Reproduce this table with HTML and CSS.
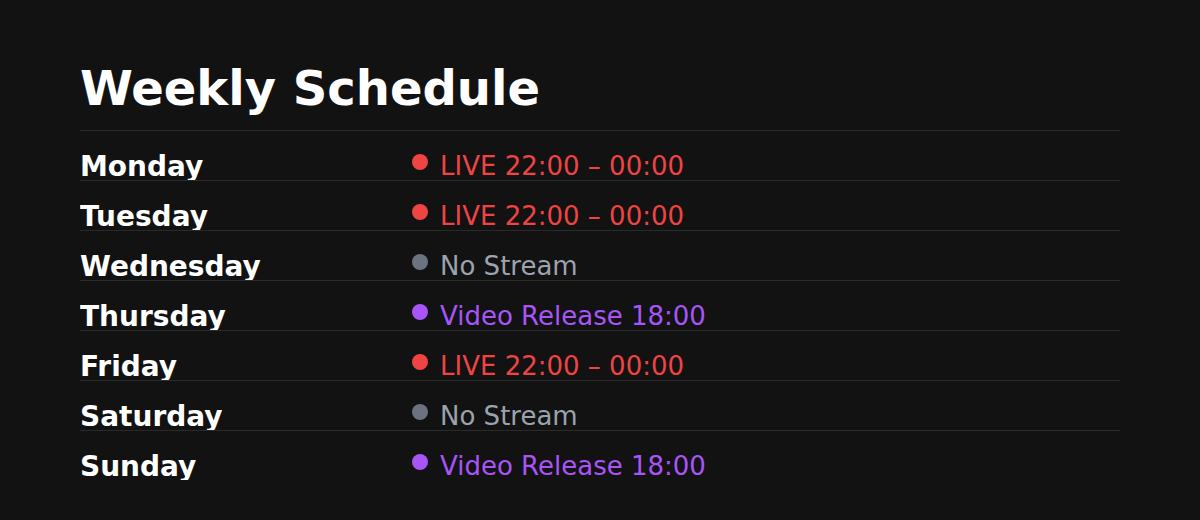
FILE: index.html
```html
<!DOCTYPE html>
<html lang="en">
<head>
<meta charset="utf-8">
<title>Weekly Schedule</title>
<link rel="stylesheet" href="styles.css">
</head>
<body>
<main class="schedule">
  <h1 class="title">Weekly Schedule</h1>
  <ul class="days">
    <li class="row"><span class="day">Monday</span><span class="status live"><span class="dot"></span>LIVE 22:00 – 00:00</span></li>
    <li class="row"><span class="day">Tuesday</span><span class="status live"><span class="dot"></span>LIVE 22:00 – 00:00</span></li>
    <li class="row"><span class="day">Wednesday</span><span class="status off"><span class="dot"></span>No Stream</span></li>
    <li class="row"><span class="day">Thursday</span><span class="status video"><span class="dot"></span>Video Release 18:00</span></li>
    <li class="row"><span class="day">Friday</span><span class="status live"><span class="dot"></span>LIVE 22:00 – 00:00</span></li>
    <li class="row"><span class="day">Saturday</span><span class="status off"><span class="dot"></span>No Stream</span></li>
    <li class="row"><span class="day">Sunday</span><span class="status video"><span class="dot"></span>Video Release 18:00</span></li>
  </ul>
</main>
</body>
</html>
```

FILE: styles.css
```css
html, body {
  margin: 0;
  padding: 0;
  background: #121212;
}
body {
  font-family: "DejaVu Sans", Verdana, sans-serif;
  color: #ffffff;
  width: 1200px;
  height: 520px;
  overflow: hidden;
}
.schedule {
  padding: 60px 80px 0 80px;
}
.title {
  margin: 0 0 14px 0;
  font-size: 48px;
  font-weight: 700;
  line-height: normal;
}
.days {
  list-style: none;
  margin: 0;
  padding: 0;
}
.row {
  display: flex;
  box-sizing: border-box;
  height: 50px;
  border-top: 1px solid #2a2a2a;
  overflow: hidden;
}
.day {
  width: 332px;
  flex: none;
  padding-top: 18.5px;
  font-size: 28px;
  font-weight: 700;
  line-height: normal;
}
.status {
  display: flex;
  gap: 12px;
  padding-top: 19.5px;
  font-size: 26px;
  line-height: normal;
}
.dot {
  width: 16px;
  height: 16px;
  border-radius: 50%;
  margin-top: 3.5px;
  flex: none;
}
.live { color: #ef4444; }
.live .dot { background: #ef4444; }
.off { color: #9ca3af; }
.off .dot { background: #6b7280; }
.video { color: #a855f7; }
.video .dot { background: #a855f7; }
```
